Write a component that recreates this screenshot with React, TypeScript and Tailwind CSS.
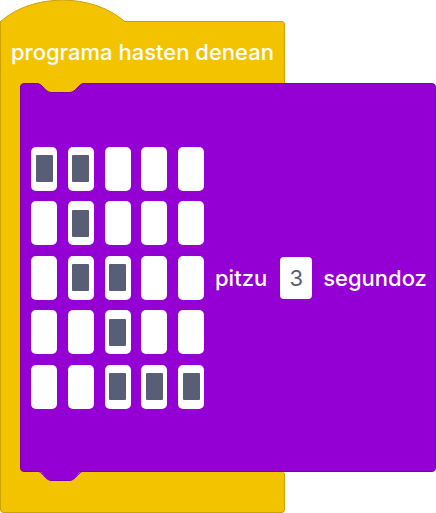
import React from "react";

const grid: number[][] = [
  [1, 1, 0, 0, 0],
  [0, 1, 0, 0, 0],
  [0, 1, 1, 0, 0],
  [0, 0, 1, 0, 0],
  [0, 0, 1, 1, 1],
];

export default function App() {
  return (
    <div
      className="relative w-[436px] h-[513px] bg-white overflow-hidden"
      style={{ fontFamily: "Inter, Roboto, 'Liberation Sans', sans-serif" }}
    >
      {/* hat curve */}
      <svg
        className="absolute left-0 top-0 z-10"
        width="127"
        height="25"
        viewBox="0 0 127 25"
      >
        <path
          d="M0.5,25 L0.5,21.5 C33,-7 92,-7 124.8,21.5 L124.8,25 Z"
          fill="#F4C300"
        />
        <path
          d="M0.5,25 L0.5,21.5 C33,-7 92,-7 124.8,21.5"
          fill="none"
          stroke="#C9A200"
          strokeWidth="1"
        />
      </svg>

      <div className="flex flex-col pt-[21px]">
        {/* top bar */}
        <div className="w-[285px] h-[62px] bg-[#F4C300] border-t border-l border-r border-[#C9A200] rounded-tr-[4px] flex items-center pl-[10px] pb-[2px]">
          <span className="text-white text-[22px] font-medium leading-none">
            programa hasten denean
          </span>
        </div>

        {/* middle */}
        <div className="flex h-[389px]">
          <div className="w-[24px] shrink-0 bg-[#F4C300] border-l border-[#C9A200]" />
          <div className="relative -ml-[4px] flex-1 bg-[#9400D3] border border-[#7800AC] rounded-[4px] flex items-center pl-[10px]">
            {/* top notch (yellow tab) */}
            <svg
              className="absolute left-[16px] -top-[1px]"
              width="47"
              height="11"
              viewBox="0 0 47 11"
            >
              <path
                d="M0,0 C5,0 8,9 14,9.5 L33,9.5 C39,9 42,0 47,0 Z"
                fill="#F4C300"
              />
              <path
                d="M0,0.5 C5,0.5 8,9 14,9.5 L33,9.5 C39,9 42,0.5 47,0.5"
                fill="none"
                stroke="#7800AC"
                strokeWidth="1"
              />
            </svg>
            {/* bottom notch (purple tab) */}
            <svg
              className="absolute left-[16px] top-full z-10"
              width="47"
              height="11"
              viewBox="0 0 47 11"
            >
              <path
                d="M0,-1 C5,-1 8,9 14,9.5 L33,9.5 C39,9 42,-1 47,-1 Z"
                fill="#9400D3"
              />
              <path
                d="M0,0 C5,0 8,9 14,9.5 L33,9.5 C39,9 42,0 47,0"
                fill="none"
                stroke="#7800AC"
                strokeWidth="1"
              />
            </svg>

            <div className="grid grid-cols-[repeat(5,26px)] gap-x-[10.75px] gap-y-[10.5px]">
              {grid.flat().map((on, i) => (
                <div
                  key={i}
                  className="w-[26px] h-[44px] bg-white rounded-[5px] flex items-center justify-center"
                >
                  {on ? (
                    <div className="w-[17px] h-[27px] bg-[#575E75] rounded-[1px]" />
                  ) : null}
                </div>
              ))}
            </div>

            <span className="ml-[11px] text-white text-[22px] font-medium leading-none">
              pitzu
            </span>
            <div className="ml-[13px] w-[32px] h-[42px] bg-white rounded-[4px] flex items-center justify-center text-[#575E75] text-[22px] leading-none">
              3
            </div>
            <span className="ml-[11px] text-white text-[22px] font-medium leading-none">
              segundoz
            </span>
          </div>
        </div>

        {/* bottom bar */}
        <div className="w-[285px] h-[41px] bg-[#F4C300] border-l border-r border-b border-[#C9A200] rounded-b-[4px] rounded-tr-[3px]" />
      </div>
    </div>
  );
}
